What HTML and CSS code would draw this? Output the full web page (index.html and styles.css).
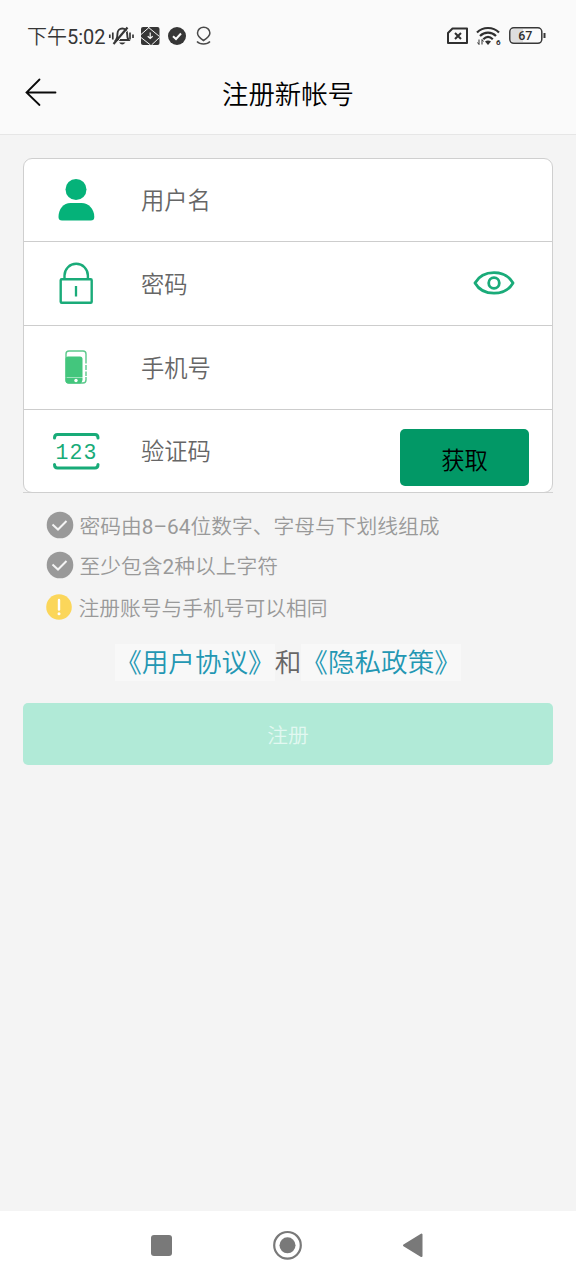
FILE: index.html
```html
<!DOCTYPE html>
<html lang="zh-CN">
<head>
<meta charset="utf-8">
<title>注册新帐号</title>
<link rel="stylesheet" href="styles.css">
</head>
<body>
<div class="screen">
  <div class="status">
    <span class="clock">下午<span class="latin">5:02</span></span>
    <svg class="status-left" width="108" height="24" viewBox="0 0 108 24">
      <path d="M8 16c1.500-2 1.500-4 1.500-6.500a4.800 5 0 0 1 9.600 0c0 2.500 0 4.500 1.500 6.500z" fill="none" stroke="#363636" stroke-width="1.900"/>
      <path d="M11 18.500h6.500q-3.200 4-6.500 0z" fill="#363636"/>
      <path d="M7.300 20.500L20.800 4.500" stroke="#f9f9f9" stroke-width="1"/>
      <path d="M5.500 20L19.500 3.500" stroke="#363636" stroke-width="2.200"/>
      <path d="M1.800 10.500v3.500M4.800 8.500v7M22 8.500v7M25 10.500v3.500" stroke="#363636" stroke-width="1.700"/>
      <rect x="33" y="3" width="18.500" height="18" rx="2" fill="#363636"/>
      <path d="M40 3l11.500 9.500M33 10.500l8.500-7.500M33 13.500l9.500 7.500M43.500 21l8-7.500" stroke="#f9f9f9" stroke-width="1"/>
      <path d="M42.200 8.500v6M39.700 12.200l2.500 2.300 2.500-2.300" stroke="#f9f9f9" stroke-width="1.200" fill="none"/>
      <circle cx="69" cy="12" r="9" fill="#363636"/>
      <path d="M65 12.200l3 2.800 5-5.500" stroke="#f9f9f9" stroke-width="2" fill="none"/>
      <path d="M95.500 16.500c-3.500-2.200-6-4.500-6-7.500a6.200 5.800 0 0 1 12.400 0c0 3-2.900 5.300-6.400 7.500zM89 17.500c3 3.300 10 3.300 13 0" stroke="#4a4a4a" stroke-width="1.500" fill="none"/>
    </svg>
    <svg class="status-right" width="102" height="24" viewBox="0 0 102 24">
      <path d="M7.500 4.500H22V19H3V9z" fill="none" stroke="#303030" stroke-width="2" stroke-linejoin="round"/>
      <path d="M10 9l6 6M16 9l-6 6" stroke="#303030" stroke-width="2"/>
      <g fill="none" stroke="#303030" stroke-width="2.200">
        <path d="M32 8.500c6-6 16-6 22 0M35 12c4.500-4.500 11.500-4.500 16 0M38.300 15.200c3-3 6.500-3 9.500 0"/>
      </g>
      <path d="M40 17.500q3-2 6 0l-3 3.500z" fill="#303030"/>
      <path d="M34 15.500v5M32.500 18.500l1.500 2M37 20.500v-5l1.500 2" stroke="#303030" stroke-width="1" fill="none"/>
      <text class="wifi-gen" x="51" y="21">6</text>
      <path d="M69 5h9v13h-9q-3 0-3-3V8q0-3 3-3z" fill="#dedede"/>
      <rect x="64.800" y="3.800" width="32" height="15.500" rx="4" fill="none" stroke="#383838" stroke-width="1.500"/>
      <path d="M99.500 9v5" stroke="#383838" stroke-width="2"/>
      <text class="battery-text" x="80.300" y="16.200">67</text>
    </svg>
  </div>

  <header class="header">
    <svg class="back" width="34" height="30" viewBox="0 0 34 30" fill="none" stroke="#0a0a0a" stroke-width="1.800" stroke-linecap="round">
      <path d="M15.500 1.500L2.500 14.500l13 12.500M2.500 14.500H31.500"/>
    </svg>
    <h1 class="title">注册新帐号</h1>
  </header>

  <main class="content">
    <div class="form">
      <div class="card">
        <div class="row">
          <div class="icon">
            <svg width="48" height="48" viewBox="0 0 48 48" fill="#05b279">
              <circle cx="24" cy="13.500" r="10.500"/>
              <path d="M6.500 41c0-8 5-14 12-14h11c7 0 12.800 6 12.800 14q0 3.500-3.500 3.500H10q-3.500 0-3.500-3.500z"/>
            </svg>
          </div>
          <span class="label">用户名</span>
        </div>
        <div class="row">
          <div class="icon">
            <svg width="48" height="48" viewBox="0 0 48 48" fill="none" stroke="#1aab79" stroke-width="2.400">
              <rect x="8.700" y="20.200" width="31" height="23.500" rx="1"/>
              <path d="M12.500 20v-3.500a11.700 11.700 0 0 1 23.400 0v3.500"/>
              <path d="M24 27v10.500" stroke-width="2.300"/>
            </svg>
          </div>
          <span class="label">密码</span>
          <svg class="eye" width="44" height="28" viewBox="0 0 44 28" fill="none" stroke="#1aab79" stroke-width="2.800">
            <path d="M3 14C7 7 14 3.700 22 3.700S37 7 41 14C37 21 30 24.200 22 24.200S7 21 3 14z" stroke-linejoin="round"/>
            <circle cx="22" cy="14" r="5.300"/>
          </svg>
        </div>
        <div class="row">
          <div class="icon">
            <svg width="48" height="48" viewBox="0 0 48 48">
              <rect x="14" y="8" width="20" height="32" rx="3" fill="none" stroke="#5cc98c" stroke-width="1.400"/>
              <path d="M13.500 16q0-2.500 2.500-2.500H28q2.500 0 2.500 2.500V34h-17z" fill="#43c67d"/>
              <path d="M13.500 34.600h17v2.400q-1 3.500-2.500 3.500H16.500q-3 0-3-3z" fill="#43c67d"/>
              <circle cx="24" cy="37.500" r="1.700" fill="#fff"/>
              <path d="M34 20.500v1.500M34 27v1.500M34 33v1" stroke="#fff" stroke-width="2"/>
            </svg>
          </div>
          <span class="label">手机号</span>
        </div>
        <div class="row">
          <div class="icon">
            <svg width="48" height="48" viewBox="0 0 48 48">
              <path d="M2.500 11q0-3.500 3-3.500h37.500q3 0 3 3.500M2.500 37.500q0 3.500 3 3.500h37.500q3 0 3-3.500" fill="none" stroke="#18ab78" stroke-width="3" stroke-linecap="round"/>
              <text class="digits" x="24.600" y="31.500">123</text>
            </svg>
          </div>
          <span class="label">验证码</span>
          <button class="get-code">获取</button>
        </div>
      </div>
    </div>

    <ul class="hints">
      <li class="hint">
        <svg width="28" height="28" viewBox="0 0 28 28"><circle cx="14" cy="14" r="13.300" fill="#999"/><path d="M6.500 13.500l5.500 5 8.500-8.500" fill="none" stroke="#f4f4f4" stroke-width="2"/></svg>
        <span class="hint-text">密码由<span class="latin">8–64</span>位数字、字母与下划线组成</span>
      </li>
      <li class="hint">
        <svg width="28" height="28" viewBox="0 0 28 28"><circle cx="14" cy="14" r="13.300" fill="#999"/><path d="M6.500 13.500l5.500 5 8.500-8.500" fill="none" stroke="#f4f4f4" stroke-width="2"/></svg>
        <span class="hint-text">至少包含<span class="latin">2</span>种以上字符</span>
      </li>
      <li class="hint hint-note">
        <svg width="27" height="28" viewBox="0 0 27 28"><circle cx="13" cy="14" r="12.800" fill="#fbd65a"/><path d="M13 7v9.500" stroke="#fff" stroke-width="2.400" stroke-linecap="round"/><circle cx="13" cy="20.700" r="1.500" fill="#fff"/></svg>
        <span class="hint-text">注册账号与手机号可以相同</span>
      </li>
    </ul>

    <p class="terms"><a class="link">《用户协议》</a><span class="and">和</span><a class="link">《隐私政策》</a></p>
    <button class="submit">注册</button>
  </main>

  <nav class="navbar">
    <svg width="576" height="69" viewBox="0 0 576 69" fill="#797979">
      <rect x="151" y="24" width="21" height="21" rx="3"/>
      <circle cx="287.500" cy="34.300" r="13.300" fill="none" stroke="#797979" stroke-width="2.200"/>
      <circle cx="287.500" cy="34.300" r="8"/>
      <path d="M404 34.300L421.500 23.500v21.600z" stroke="#797979" stroke-width="2" stroke-linejoin="round"/>
    </svg>
  </nav>
</div>
</body>
</html>
```
FILE: styles.css
```css
* {
  box-sizing: border-box;
}

body {
  margin: 0;
  background: #f4f4f4;
  font-family: Roboto, "Noto Sans CJK SC", sans-serif;
  font-weight: 350;
}

.screen {
  display: flex;
  flex-direction: column;
  width: 576px;
  height: 1280px;
  background: #f4f4f4;
}

.latin {
  font-weight: 400;
}

.status {
  display: flex;
  align-items: center;
  height: 72px;
  padding: 0 29px 0 27px;
  background: #fafafa;
  color: #363636;
}

.clock {
  width: 81px;
  padding-top: 1px;
  font-size: 20px;
  line-height: 30px;
  white-space: nowrap;
}

.status-right {
  margin-left: auto;
}

.wifi-gen {
  font-size: 8px;
  font-weight: 700;
  fill: #303030;
}

.battery-text {
  font-size: 12.5px;
  font-weight: 500;
  text-anchor: middle;
  fill: #303030;
}

.header {
  display: grid;
  grid-template-columns: 34px 1fr 34px;
  align-items: center;
  height: 63px;
  padding: 0 24px 22px;
  background: #fafafa;
  border-bottom: 1px solid #e6e6e6;
}

.title {
  margin: 5px 0 0;
  color: #000;
  font-size: 26.4px;
  font-weight: 350;
  line-height: 36px;
  text-align: center;
}

.content {
  flex: 1;
  padding: 23px 23px 0;
}

.form {
  border-bottom: 1px solid #d3d3d3;
}

.card {
  height: 335px;
  margin-bottom: -1px;
  border: 1px solid #cfcfcf;
  border-radius: 9px;
  background: #fff;
}

.row {
  display: flex;
  align-items: center;
  height: 84px;
  padding: 0 23px 0 28px;
  border-bottom: 1px solid #cdcdcd;
}

.row:first-child {
  height: 83px;
}

.row:last-child {
  height: 82px;
  border-bottom: 0;
}

.icon {
  display: flex;
  width: 89px;
  padding-bottom: 1px;
}

.label {
  flex: 1;
  padding-top: 2px;
  color: #666;
  font-size: 23.3px;
  line-height: 34px;
}

.eye {
  margin: 0 13px 2px 0;
}

.get-code {
  align-self: flex-end;
  width: 129px;
  height: 57px;
  margin-bottom: 6px;
  padding: 2px 0 0;
  border: 0;
  border-radius: 5px;
  background: #029866;
  color: #000;
  font: inherit;
  font-size: 23.3px;
}

.hints {
  display: flex;
  flex-direction: column;
  margin: 18px 0 0;
  padding: 0 0 0 23px;
  list-style: none;
}

.hint {
  display: flex;
  align-items: center;
  gap: 5px;
  height: 40px;
  color: #999;
  font-size: 20.75px;
  line-height: 28px;
}

.hint:first-child {
  height: 28px;
  margin-bottom: 6px;
}

.hint-text {
  padding: 3px 0 0 0.5px;
}

.hint-note {
  margin-top: 2px;
}

.terms {
  display: flex;
  justify-content: center;
  margin: 17px 0 0;
  font-size: 26.6px;
  line-height: 37px;
}

.link {
  background: #f8f8f8;
  color: #2397b3;
}

.and {
  color: #666;
}

.submit {
  display: block;
  width: 530px;
  height: 62px;
  margin-top: 22px;
  padding: 0;
  border: 0;
  border-radius: 5px;
  background: #b1ead7;
  color: #e2f8f1;
  font: inherit;
  font-size: 20.75px;
}

.navbar {
  height: 69px;
  background: #fff;
}

.navbar svg {
  display: block;
}

.digits {
  font-family: "Liberation Mono", monospace;
  font-size: 21.5px;
  font-weight: 400;
  letter-spacing: 1.1px;
  text-anchor: middle;
  fill: #18ab78;
}
```
